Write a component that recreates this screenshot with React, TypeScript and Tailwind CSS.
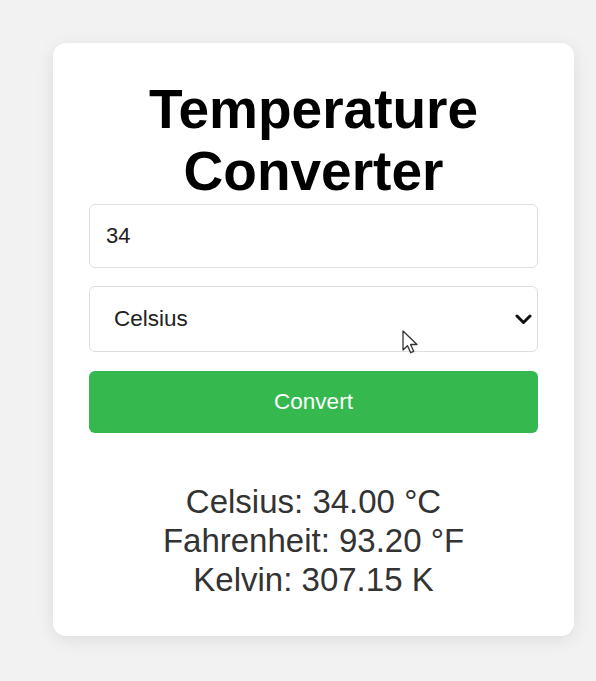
import { useState } from 'react';

type Unit = 'celsius' | 'fahrenheit' | 'kelvin';

function toAll(value: number, unit: Unit) {
  let c = value;
  if (unit === 'fahrenheit') c = ((value - 32) * 5) / 9;
  if (unit === 'kelvin') c = value - 273.15;
  return {
    c: c.toFixed(2),
    f: ((c * 9) / 5 + 32).toFixed(2),
    k: (c + 273.15).toFixed(2),
  };
}

export default function App() {
  const [value, setValue] = useState('34');
  const [unit, setUnit] = useState<Unit>('celsius');
  const [result, setResult] = useState(() => toAll(34, 'celsius'));

  const handleConvert = () => {
    const n = parseFloat(value);
    if (!isNaN(n)) setResult(toAll(n, unit));
  };

  return (
    <div className="min-h-[681px] bg-[#f2f2f2] pt-[43px] pb-[45px] font-['Liberation_Sans',Arial,sans-serif]">
      <div className="relative ml-[53px] w-[521px] rounded-[13px] bg-white px-[36px] pt-[35px] pb-[37px] shadow-[0_4px_18px_rgba(0,0,0,0.09)]">
        {/* Title */}
        <h1 className="text-center text-[55px] font-bold leading-[62px] text-black">
          Temperature Converter
        </h1>

        {/* Form */}
        <div className="mt-[2px] flex flex-col">
          <input
            type="number"
            value={value}
            onChange={(e) => setValue(e.target.value)}
            className="h-[64px] w-full rounded-[6px] border border-[#dedede] bg-white pl-[16px] text-[22px] text-[#222] outline-none [appearance:textfield] [&::-webkit-inner-spin-button]:appearance-none"
          />

          <div className="relative mt-[18px]">
            <select
              value={unit}
              onChange={(e) => setUnit(e.target.value as Unit)}
              className="h-[66px] w-full appearance-none rounded-[6px] border border-[#dedede] bg-white pl-[24px] text-[22.5px] text-[#222] outline-none"
            >
              <option value="celsius">Celsius</option>
              <option value="fahrenheit">Fahrenheit</option>
              <option value="kelvin">Kelvin</option>
            </select>
            <svg
              className="pointer-events-none absolute right-[6px] top-[28px] h-[11px] w-[17px]"
              viewBox="0 0 17 11"
              fill="none"
              stroke="#111"
              strokeWidth="3"
              strokeLinecap="round"
              strokeLinejoin="round"
            >
              <path d="M2 2l6.5 6.5L15 2" />
            </svg>
          </div>

          <button
            type="button"
            onClick={handleConvert}
            className="mt-[19px] h-[62px] w-full rounded-[6px] bg-[#35b94e] text-[22.5px] text-white"
          >
            Convert
          </button>
        </div>

        {/* Results */}
        <div className="mt-[49px] text-center text-[33px] leading-[39px] text-[#333]">
          <p>Celsius: {result.c} °C</p>
          <p>Fahrenheit: {result.f} °F</p>
          <p>Kelvin: {result.k} K</p>
        </div>

        {/* mouse pointer captured in the screenshot */}
        <svg
          className="pointer-events-none absolute left-[349px] top-[287px] h-[24px] w-[16px]"
          viewBox="0 0 16 24"
        >
          <path
            d="M1 1v19l4.5-4.3 3.2 7 3-1.4-3.1-6.8H15z"
            fill="#fff"
            stroke="#333"
            strokeWidth="1.3"
            strokeLinejoin="round"
          />
        </svg>
      </div>
    </div>
  );
}
